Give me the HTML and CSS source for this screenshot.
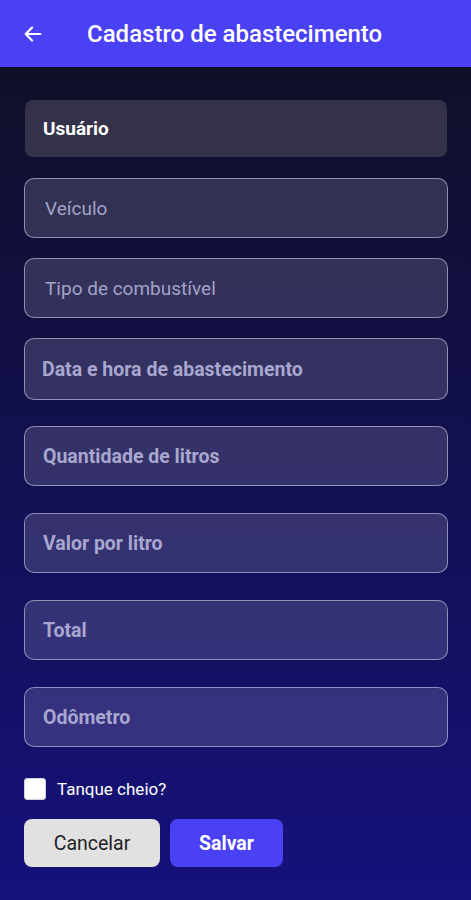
FILE: index.html
```html
<!DOCTYPE html>
<html lang="pt-BR">
<head>
  <meta charset="UTF-8" />
  <meta name="viewport" content="width=device-width, initial-scale=1.0" />
  <title>Cadastro de abastecimento</title>
  <link rel="stylesheet" href="styles.css">
</head>
<body>
  <header class="barra">
    <button class="voltar" aria-label="Voltar">
      <svg width="22" height="22" viewBox="0 0 24 24"><path d="M20 12H5M11 5l-7 7 7 7" fill="none" stroke="#fff" stroke-width="2.4" stroke-linecap="round" stroke-linejoin="round"/></svg>
    </button>
    <h1>Cadastro de abastecimento</h1>
  </header>

  <main class="form">
    <div class="usuario">Usuário</div>

    <input class="campo" type="text" placeholder="Veículo">
    <input class="campo" type="text" placeholder="Tipo de combustível">
    <input class="campo forte data" type="text" placeholder="Data e hora de abastecimento">
    <input class="campo forte" type="text" placeholder="Quantidade de litros">
    <input class="campo forte" type="text" placeholder="Valor por litro">
    <input class="campo forte" type="text" placeholder="Total">
    <input class="campo forte" type="text" placeholder="Odômetro">

    <label class="tanque">
      <input type="checkbox">
      <span class="caixa"></span>
      Tanque cheio?
    </label>

    <div class="botoes">
      <button class="cancelar">Cancelar</button>
      <button class="salvar">Salvar</button>
    </div>
  </main>
</body>
</html>
```

FILE: styles.css
```css
html {
  min-height: 100%;
  background: linear-gradient(#10102a 8%, #16117c 100%);
}
body {
  margin: 0;
  min-height: 900px;
  font-family: Roboto, "Noto Sans", sans-serif;
  color: #fff;
}
.barra {
  height: 67px;
  background-color: #4a41f4;
  display: flex;
  align-items: center;
  padding: 0 0 0 22px;
}
.voltar {
  background: none;
  border: 0;
  padding: 0;
  width: 24px;
  height: 24px;
  display: flex;
  align-items: center;
  cursor: pointer;
}
.barra h1 {
  margin: 0 0 0 41px;
  font-size: 24px;
  font-weight: 500;
}
.form {
  padding: 33px 23px 0 24px;
  display: flex;
  flex-direction: column;
}
.usuario {
  height: 57px;
  margin: 0 1px 21px 1px;
  background-color: #33324a;
  border-radius: 8px;
  display: flex;
  align-items: center;
  padding-left: 18px;
  font-size: 19px;
  font-weight: 700;
}
.campo {
  height: 60px;
  box-sizing: border-box;
  margin: 0 0 20px 0;
  padding: 0 20px;
  border: 1.5px solid rgba(220, 220, 240, 0.55);
  border-radius: 10px;
  background-color: rgba(255, 255, 255, 0.14);
  font-family: inherit;
  font-size: 19px;
  color: #fff;
  outline: none;
}
.campo::placeholder {
  color: #a4a2c6;
}
.forte {
  font-size: 19.5px;
  font-weight: 700;
  padding-left: 18px;
  margin-bottom: 27px;
}
.forte::placeholder {
  color: #a9a7cf;
}
.data {
  height: 62px;
  padding-left: 17px;
  margin-bottom: 26px;
}
.campo:last-of-type {
  margin-bottom: 31px;
}
.tanque {
  display: flex;
  align-items: center;
  font-size: 17px;
  cursor: pointer;
}
.tanque input {
  display: none;
}
.caixa {
  width: 22px;
  height: 22px;
  background-color: #fff;
  border: 1px solid #cfcfe0;
  border-radius: 3px;
  box-sizing: border-box;
  margin-right: 11px;
}
.botoes {
  display: flex;
  gap: 10px;
  margin-top: 19px;
}
.botoes button {
  height: 48px;
  border: 0;
  border-radius: 8px;
  font-family: inherit;
  font-size: 19.5px;
  cursor: pointer;
}
.cancelar {
  width: 136px;
  background-color: #e1e1e1;
  color: #222;
}
.salvar {
  width: 113px;
  background-color: #4a41f4;
  color: #fff;
  font-weight: 700;
}
```
